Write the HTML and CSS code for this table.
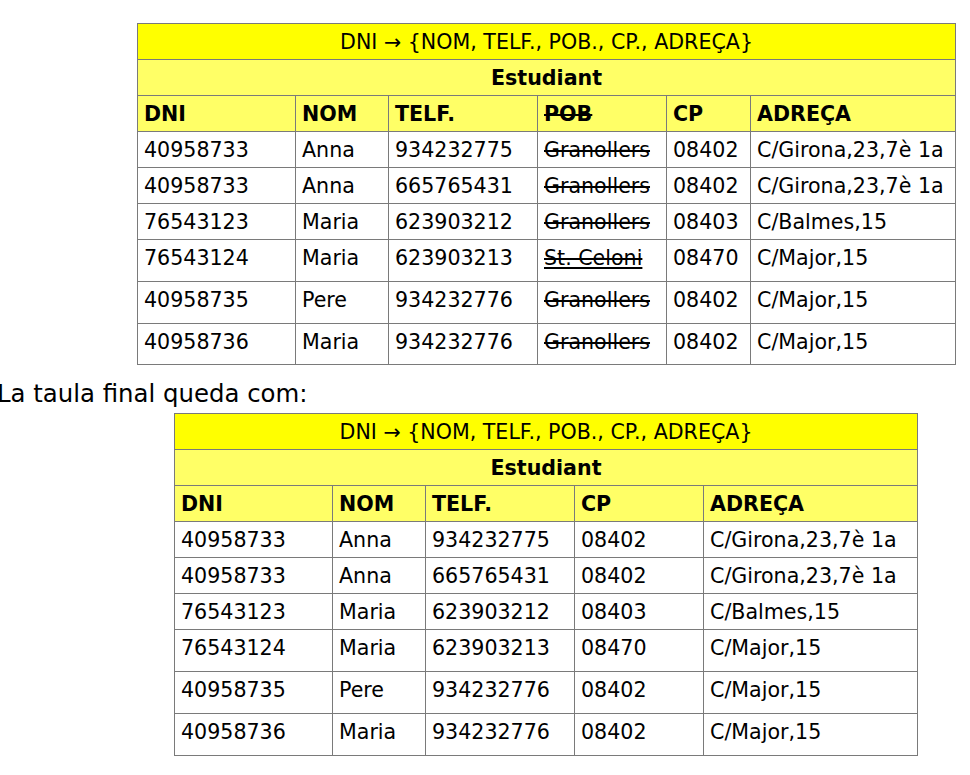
FILE: index.html
```html
<!DOCTYPE html>
<html>
<head>
<meta charset="utf-8">
<link rel="stylesheet" href="styles.css">
</head>
<body>
<div class="page">
  <table class="rel rel-first">
    <colgroup>
      <col class="c-dni"><col class="c-nom"><col class="c-telf"><col class="c-pob"><col class="c-cp"><col class="c-adr">
    </colgroup>
    <tr class="dep"><td colspan="6">DNI → {NOM, TELF., POB., CP., ADREÇA}</td></tr>
    <tr class="name"><td colspan="6">Estudiant</td></tr>
    <tr class="head"><td>DNI</td><td>NOM</td><td>TELF.</td><td><s>POB</s></td><td>CP</td><td>ADREÇA</td></tr>
    <tr><td>40958733</td><td>Anna</td><td>934232775</td><td><s>Granollers</s></td><td>08402</td><td>C/Girona,23,7è 1a</td></tr>
    <tr><td>40958733</td><td>Anna</td><td>665765431</td><td><s>Granollers</s></td><td>08402</td><td>C/Girona,23,7è 1a</td></tr>
    <tr><td>76543123</td><td>Maria</td><td>623903212</td><td><s>Granollers</s></td><td>08403</td><td>C/Balmes,15</td></tr>
    <tr class="tall"><td>76543124</td><td>Maria</td><td>623903213</td><td><s class="ul">St. Celoni</s></td><td>08470</td><td>C/Major,15</td></tr>
    <tr class="tall"><td>40958735</td><td>Pere</td><td>934232776</td><td><s>Granollers</s></td><td>08402</td><td>C/Major,15</td></tr>
    <tr class="tall"><td>40958736</td><td>Maria</td><td>934232776</td><td><s>Granollers</s></td><td>08402</td><td>C/Major,15</td></tr>
  </table>
  <p class="lead">La taula final queda com:</p>
  <table class="rel rel-second">
    <colgroup>
      <col class="c-dni"><col class="c-nom"><col class="c-telf"><col class="c-cp2"><col class="c-adr2">
    </colgroup>
    <tr class="dep"><td colspan="5">DNI → {NOM, TELF., POB., CP., ADREÇA}</td></tr>
    <tr class="name"><td colspan="5">Estudiant</td></tr>
    <tr class="head"><td>DNI</td><td>NOM</td><td>TELF.</td><td>CP</td><td>ADREÇA</td></tr>
    <tr><td>40958733</td><td>Anna</td><td>934232775</td><td>08402</td><td>C/Girona,23,7è 1a</td></tr>
    <tr><td>40958733</td><td>Anna</td><td>665765431</td><td>08402</td><td>C/Girona,23,7è 1a</td></tr>
    <tr><td>76543123</td><td>Maria</td><td>623903212</td><td>08403</td><td>C/Balmes,15</td></tr>
    <tr class="tall"><td>76543124</td><td>Maria</td><td>623903213</td><td>08470</td><td>C/Major,15</td></tr>
    <tr class="tall"><td>40958735</td><td>Pere</td><td>934232776</td><td>08402</td><td>C/Major,15</td></tr>
    <tr class="tall"><td>40958736</td><td>Maria</td><td>934232776</td><td>08402</td><td>C/Major,15</td></tr>
  </table>
</div>
</body>
</html>
```
FILE: styles.css
```css
html, body {
  margin: 0;
  padding: 0;
  background: #ffffff;
}
body {
  font-family: "DejaVu Sans", sans-serif;
  color: #000;
  overflow: hidden;
}
.page {
  padding-top: 23px;
}
.rel {
  border-collapse: collapse;
  table-layout: fixed;
  font-size: 20.6px;
  border: 1px solid #6e6e6e;
}
.rel-first {
  margin-left: 137px;
  width: 818px;
}
.rel-second {
  margin-left: 174px;
  width: 743px;
}
.c-dni { width: 158px; }
.c-nom { width: 93px; }
.c-telf { width: 149px; }
.c-pob { width: 129px; }
.c-cp { width: 84px; }
.c-adr { width: 205px; }
.c-cp2 { width: 129px; }
.c-adr2 { width: 214px; }
.rel td {
  border: 1px solid #7a7a7a;
  height: 36px;
  box-sizing: border-box;
  padding: 6px 6px 0;
  white-space: nowrap;
  line-height: 24px;
  vertical-align: top;
}
.rel tr.tall td {
  height: 41.8px;
}
.rel tr.dep td {
  background: #ffff00;
  text-align: center;
}
.rel tr.name td {
  background: #ffff66;
  text-align: center;
  font-weight: bold;
}
.rel tr.head td {
  background: #ffff66;
  font-weight: bold;
}
s.ul {
  text-decoration: line-through underline;
}
.lead {
  margin: 15px 0 5px -3px;
  font-size: 24.4px;
  line-height: 28px;
}
```
